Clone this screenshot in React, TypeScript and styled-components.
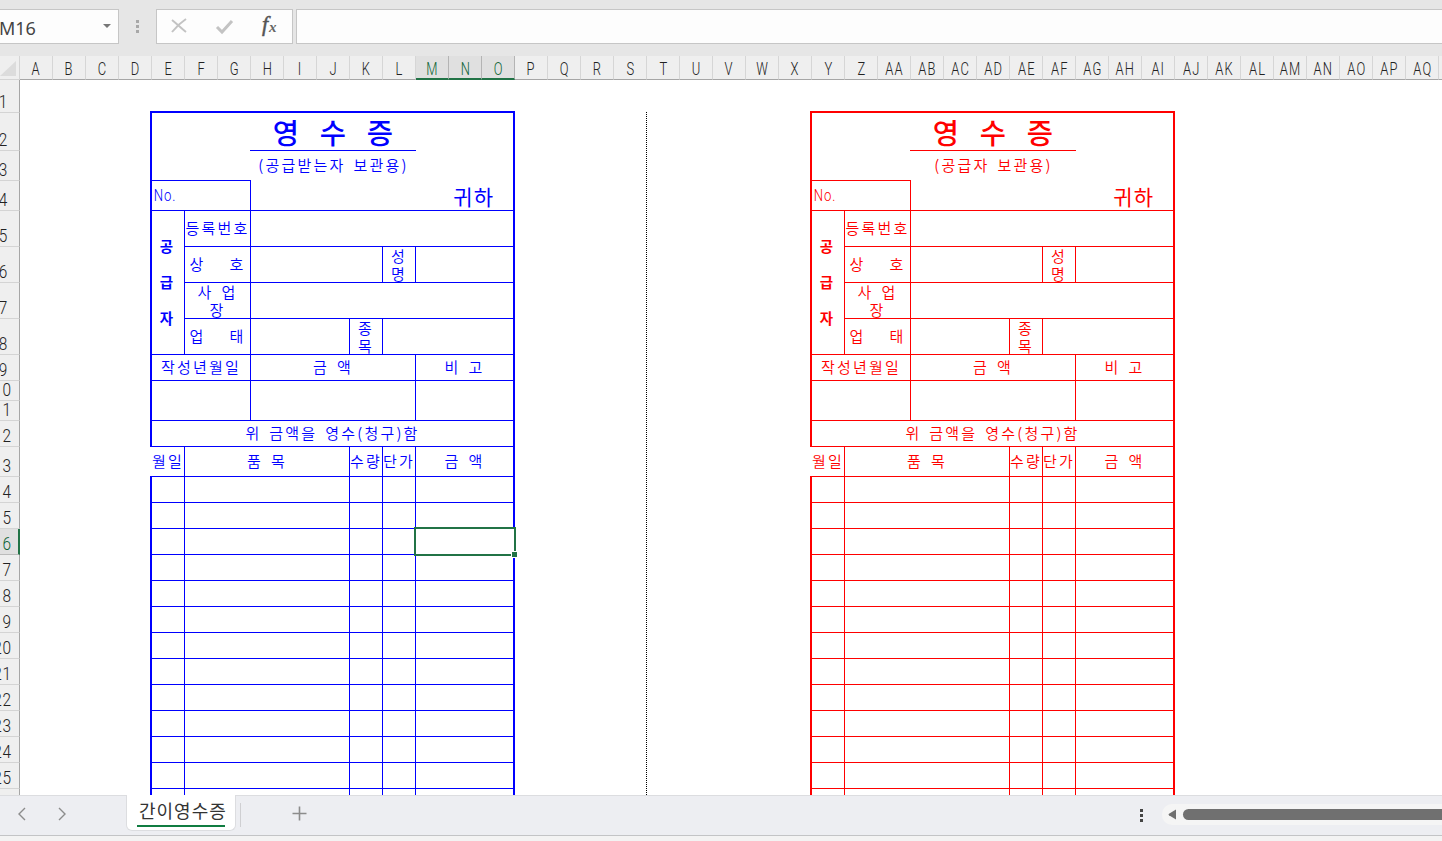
import React from "react";
import styled, { createGlobalStyle } from "styled-components";

const SANS = '"Noto Sans CJK KR", "Noto Sans", sans-serif';

const Global = createGlobalStyle`
  * { box-sizing: border-box; }
  body { margin: 0; background: #fff; overflow: hidden; font-family: ${SANS}; }
`;

const Window = styled.div`
  width: 1442px;
  height: 841px;
  display: flex;
  flex-direction: column;
  overflow: hidden;
`;

/* ---------- formula bar ---------- */
const FormulaBar = styled.div`
  flex: 0 0 56px;
  display: flex;
  align-items: flex-start;
  padding-top: 9px;
  background: #e6e6e6;
`;
const Field = styled.div<{ $w?: number; $open?: "left" | "right"; $gap?: number }>`
  ${(p) => (p.$w ? `flex: 0 0 ${p.$w}px;` : "flex: 1;")}
  height: 35px;
  margin-left: ${(p) => p.$gap ?? 0}px;
  display: flex;
  align-items: center;
  background: #fdfdfd;
  border: 1px solid #c6c6c6;
  ${(p) => (p.$open ? `border-${p.$open}: 0;` : "")}
`;
const CellName = styled.span`
  flex: 1;
  margin-left: -1px;
  padding-top: 3px;
  font: 18px "Noto Sans", sans-serif;
  letter-spacing: -0.1px;
  color: #444;
`;
const Caret = styled.span`
  margin: 0 7px 2px 0;
  border: 4px solid transparent;
  border-top-color: #777;
  border-bottom: 0;
`;
const Dots = styled.div<{ $color: string }>`
  display: flex;
  flex-direction: column;
  gap: 2px;
  i {
    width: 3px;
    height: 3px;
    background: ${(p) => p.$color};
  }
`;
const Grip = styled.div`
  flex: 0 0 37px;
  display: flex;
  justify-content: center;
  padding-top: 11px;
`;

/* ---------- column headings ---------- */
const ColumnBar = styled.div`
  flex: 0 0 24px;
  height: 24px;
  min-height: 0;
  display: flex;
  background: #efefef;
`;
const Corner = styled.div`
  flex: 0 0 20px;
  padding-top: 4px;
  border-bottom: 1px solid #d4d4d4;
  border-right: 1px solid #d4d4d4;
  svg { display: block; }
`;
const ColumnHead = styled.div<{ $active: boolean }>`
  flex: 0 0 33px;
  height: 24px;
  display: flex;
  justify-content: center;
  padding: 2px 0 0 1px;
  font: 300 17.5px/22px Roboto, sans-serif;
  letter-spacing: 1.5px;
  color: ${(p) => (p.$active ? "#0f6536" : "#222")};
  background: ${(p) => (p.$active ? "#e0e0e0" : "#efefef")};
  border-right: 1px solid ${(p) => (p.$active ? "#b4b4b4" : "#d6d6d6")};
  border-bottom: ${(p) => (p.$active ? "2px solid #217346" : "1px solid #a6a6a6")};
  span { transform: scaleX(0.74); }
`;

/* ---------- sheet body ---------- */
const Body = styled.div`
  flex: 0 0 715px;
  min-height: 0;
  display: flex;
  overflow: hidden;
`;
const RowBar = styled.div`
  flex: 0 0 20px;
  overflow: hidden;
`;
const RowHead = styled.div<{ $h: number; $active: boolean }>`
  height: ${(p) => p.$h}px;
  display: flex;
  justify-content: center;
  align-items: flex-end;
  margin-left: -16px;
  padding: 0 0 1px 3px;
  font: 300 17.5px/18px Roboto, sans-serif;
  letter-spacing: 0.8px;
  color: ${(p) => (p.$active ? "#0f6536" : "#222")};
  background: ${(p) => (p.$active ? "#e0e0e0" : "#efefef")};
  border-bottom: 1px solid ${(p) => (p.$active ? "#bbb" : "#d4d4d4")};
  border-right: ${(p) => (p.$active ? "2px solid #217346" : "1px solid #a6a6a6")};
  span { transform: scaleX(0.88); }
`;
const Sheet = styled.div`
  flex: 1;
  display: flex;
  align-items: flex-start;
  padding: 31px 0 0 130px;
`;
const CutLine = styled.div`
  flex: 0 0 132px;
  height: 690px;
  margin: 1px 163px 0 0;
  background: repeating-linear-gradient(#000 0 1px, #fff 1px 2px) right / 1px 100% no-repeat;
`;

/* ---------- receipt form ---------- */
const Form = styled.div<{ $ink: string }>`
  --ink: ${(p) => p.$ink};
  position: relative;
  flex: 0 0 365px;
  display: grid;
  grid-template-columns: 2px repeat(11, 33px);
  grid-template-rows: 38px 30px 30px 36px 36px 36px 36px 26px 20px 20px 26px 30px repeat(13, 26px);
  color: var(--ink);
  border-top: 2px solid var(--ink);
`;
const Rail = styled.div<{ $from: number; $to: number }>`
  grid-column: 1;
  grid-row: ${(p) => p.$from} / ${(p) => p.$to};
  background: var(--ink);
`;
const RailGap = styled.div`
  grid-column: 1;
  grid-row: 12;
  border-bottom: 1px solid var(--ink);
`;
/* $c and $r are start/end grid lines; $edges lists which rules are drawn */
const Cell = styled.div<{ $c: [number, number]; $r: [number, number]; $edges?: string }>`
  grid-column: ${(p) => p.$c[0]} / ${(p) => p.$c[1]};
  grid-row: ${(p) => p.$r[0]} / ${(p) => p.$r[1]};
  min-width: 0;
  display: flex;
  align-items: center;
  justify-content: center;
  border: 0 solid var(--ink);
  border-right-width: ${(p) => (p.$c[1] === 13 ? 2 : (p.$edges ?? "rb").includes("r") ? 1 : 0)}px;
  border-bottom-width: ${(p) => ((p.$edges ?? "rb").includes("b") ? 1 : 0)}px;
`;
const TitleCell = styled(Cell)`
  margin-left: -1px;
`;
const Label = styled.span<{ $stacked?: boolean }>`
  font: 350 15px/18px ${SANS};
  letter-spacing: 2.2px;
  word-spacing: 2.4px;
  white-space: pre;
  text-align: center;
  padding-bottom: ${(p) => (p.$stacked ? 0 : 2)}px;
`;
const Title = styled.span`
  font: 500 28.5px/34px ${SANS};
  letter-spacing: 5.3px;
  word-spacing: 3.8px;
  white-space: pre;
  margin: 1px 0 0 5px;
`;
const NumberLabel = styled.span`
  flex: 1;
  padding-left: 2px;
  transform: scaleX(0.82);
  transform-origin: left;
  font: 300 16px/18px Roboto, sans-serif;
  letter-spacing: 1.2px;
`;
const Addressee = styled.span`
  flex: 1;
  padding: 1px 19px 0 0;
  text-align: right;
  font: 400 21px/24px ${SANS};
  letter-spacing: 1px;
`;
const Supplier = styled.span`
  font: 700 14.5px/36px ${SANS};
  text-align: center;
  padding: 0 3px 2px 0;
`;
const Selection = styled.div`
  position: absolute;
  left: 264px;
  top: 414px;
  width: 102px;
  height: 29px;
  border: 2px solid #217346;
  background: #fff;
`;
const FillHandle = styled.i`
  position: absolute;
  right: -4px;
  bottom: -4px;
  width: 7px;
  height: 7px;
  background: #217346;
  border: 1px solid #fff;
`;

const ITEM_COLUMNS: [number, number][] = [[2, 3], [3, 8], [8, 9], [9, 10], [10, 13]];
const ITEM_TITLES = ["월일", "품 목", "수량", "단가", "금 액"];

function Receipt({ ink, copy, selected }: { ink: string; copy: string; selected?: boolean }) {
  return (
    <Form $ink={ink}>
      <Rail $from={1} $to={12} />
      <RailGap />
      <Rail $from={13} $to={26} />
      <TitleCell $c={[5, 10]} $r={[1, 2]} $edges="b"><Title>영 수 증</Title></TitleCell>
      <Cell $c={[10, 13]} $r={[1, 2]} $edges="" />
      <Cell $c={[2, 5]} $r={[2, 3]} $edges="b" />
      <Cell $c={[5, 10]} $r={[2, 3]} $edges=""><Label>{copy}</Label></Cell>
      <Cell $c={[10, 13]} $r={[2, 3]} $edges="" />
      <Cell $c={[2, 5]} $r={[3, 4]}><NumberLabel>No.</NumberLabel></Cell>
      <Cell $c={[5, 13]} $r={[3, 4]}><Addressee>귀하</Addressee></Cell>

      <Cell $c={[2, 3]} $r={[4, 8]}><Supplier>공<br />급<br />자</Supplier></Cell>
      <Cell $c={[3, 5]} $r={[4, 5]}><Label>등록번호</Label></Cell>
      <Cell $c={[5, 13]} $r={[4, 5]} />
      <Cell $c={[3, 5]} $r={[5, 6]}><Label>상   호</Label></Cell>
      <Cell $c={[5, 9]} $r={[5, 6]} />
      <Cell $c={[9, 10]} $r={[5, 6]}><Label $stacked>성<br />명</Label></Cell>
      <Cell $c={[10, 13]} $r={[5, 6]} />
      <Cell $c={[3, 5]} $r={[6, 7]}><Label $stacked>사 업<br />장</Label></Cell>
      <Cell $c={[5, 13]} $r={[6, 7]} />
      <Cell $c={[3, 5]} $r={[7, 8]}><Label>업   태</Label></Cell>
      <Cell $c={[5, 8]} $r={[7, 8]} />
      <Cell $c={[8, 9]} $r={[7, 8]}><Label $stacked>종<br />목</Label></Cell>
      <Cell $c={[9, 13]} $r={[7, 8]} />

      <Cell $c={[2, 5]} $r={[8, 9]}><Label>작성년월일</Label></Cell>
      <Cell $c={[5, 10]} $r={[8, 9]}><Label>금 액</Label></Cell>
      <Cell $c={[10, 13]} $r={[8, 9]}><Label>비 고</Label></Cell>
      <Cell $c={[2, 5]} $r={[9, 11]} />
      <Cell $c={[5, 10]} $r={[9, 11]} />
      <Cell $c={[10, 13]} $r={[9, 11]} />
      <Cell $c={[2, 13]} $r={[11, 12]}><Label>위 금액을 영수(청구)함</Label></Cell>

      {ITEM_TITLES.map((t, i) => (
        <Cell key={t} $c={ITEM_COLUMNS[i]} $r={[12, 13]}><Label>{t}</Label></Cell>
      ))}
      {Array.from({ length: 13 }, (_, row) =>
        ITEM_COLUMNS.map((c) => <Cell key={`${row}-${c[0]}`} $c={c} $r={[row + 13, row + 14]} />)
      )}
      {selected && <Selection><FillHandle /></Selection>}
    </Form>
  );
}

/* ---------- sheet tabs ---------- */
const TabBar = styled.div`
  flex: 0 0 41px;
  display: flex;
  align-items: flex-start;
  background: #edeef2;
  border-top: 1px solid #dcdde0;
  border-bottom: 1px solid #c3c4c6;
`;
const TabNav = styled.div`
  flex: 0 0 126px;
  display: flex;
  gap: 26px;
  padding: 11px 0 0 15px;
`;
const Tab = styled.div`
  flex: 0 0 110px;
  width: 110px;
  min-width: 0;
  height: 36px;
  margin-top: -1px;
  padding: 0 10px;
  background: #fff;
  border: 1px solid #dcdde0;
  border-top: 0;
  border-radius: 0 0 6px 6px;
  font: 400 18px/31px ${SANS};
  color: #333;
  white-space: nowrap;
`;
const TabName = styled.div`
  height: 32px;
  padding-left: 2px;
  letter-spacing: 1px;
  border-bottom: 2px solid #107c41;
`;
const TabDivider = styled.div`
  width: 1px;
  height: 24px;
  margin: 7px 52px 0 4px;
  background: #cfcfd2;
`;
const AddTab = styled.div`
  flex: 1;
  padding-top: 10px;
  svg { display: block; margin-left: -1px; }
`;
const Splitter = styled.div`
  flex: 0 0 22px;
  padding-top: 13px;
`;
const ScrollTrack = styled.div`
  flex: 0 0 280px;
  height: 21px;
  margin-top: 8px;
  display: flex;
  align-items: center;
  gap: 6px;
  padding-left: 6px;
  background: #f5f5f5;
  border-radius: 10px 0 0 10px;
`;
const Thumb = styled.div`
  flex: 1;
  height: 11px;
  background: #707070;
  border-radius: 6px 0 0 6px;
`;
const StatusStrip = styled.div`
  flex: 1;
  background: #f3f3f3;
`;

const colName = (i: number) =>
  (i >= 26 ? "A" : "") + String.fromCharCode(65 + (i % 26));

const rowHeights = [33, 38, 30, 30, 36, 36, 36, 36, 26, 20, 20, 26, 30, ...Array(13).fill(26)];

export default function App() {
  return (
    <Window>
      <Global />
      <FormulaBar>
        <Field $w={119} $open="left"><CellName>M16</CellName><Caret /></Field>
        <Grip><Dots $color="#a8a8a8"><i /><i /><i /></Dots></Grip>
        <Field $w={137}>
          <svg width="135" height="33" fill="none">
            <path d="M15 10c5 4 9 8 14 12M29 9c-6 4-10 8-14 13" stroke="#c3c3c3" strokeWidth="2" />
            <path d="M60 17l5 5L75 11" stroke="#c3c3c3" strokeWidth="3" />
            <text x="105" y="21" fontFamily="Liberation Serif, serif" fontStyle="italic" fontWeight="400" fontSize="22" fill="#555" stroke="#555" strokeWidth="0.5">f</text>
            <text x="112" y="22" fontFamily="Liberation Serif, serif" fontStyle="italic" fontWeight="700" fontSize="15" fill="#666">x</text>
          </svg>
        </Field>
        <Field $open="right" $gap={3} />
      </FormulaBar>
      <ColumnBar>
        <Corner><svg width="17" height="17"><path d="M16 1V16H0z" fill="#dcdcdc" /></svg></Corner>
        {Array.from({ length: 44 }, (_, i) => (
          <ColumnHead key={i} $active={i >= 12 && i <= 14}><span>{i < 43 ? colName(i) : ""}</span></ColumnHead>
        ))}
      </ColumnBar>
      <Body>
        <RowBar>
          {rowHeights.map((h, i) => (
            <RowHead key={i} $h={h} $active={i === 15}><span>{i < 25 ? i + 1 : ""}</span></RowHead>
          ))}
        </RowBar>
        <Sheet>
          <Receipt ink="#0000ff" copy="(공급받는자 보관용)" selected />
          <CutLine />
          <Receipt ink="#ff0000" copy="(공급자 보관용)" />
        </Sheet>
      </Body>
      <TabBar>
        <TabNav>
          <svg width="14" height="14" fill="none" stroke="#8c8c8c" strokeWidth="1.4"><path d="M10 1L4 7l6 6" /></svg>
          <svg width="14" height="14" fill="none" stroke="#8c8c8c" strokeWidth="1.4"><path d="M4 1l6 6-6 6" /></svg>
        </TabNav>
        <Tab><TabName>간이영수증</TabName></Tab>
        <TabDivider />
        <AddTab><svg width="15" height="15" stroke="#8c8c8c" strokeWidth="1.6"><path d="M7.5 0.5v14M0.5 7.5h14" /></svg></AddTab>
        <Splitter><Dots $color="#444"><i /><i /><i /></Dots></Splitter>
        <ScrollTrack>
          <svg width="9" height="11"><path d="M8 0.5v10L1 6.2Q0 5.500 1 4.800z" fill="#707070" /></svg>
          <Thumb />
        </ScrollTrack>
      </TabBar>
      <StatusStrip />
    </Window>
  );
}
